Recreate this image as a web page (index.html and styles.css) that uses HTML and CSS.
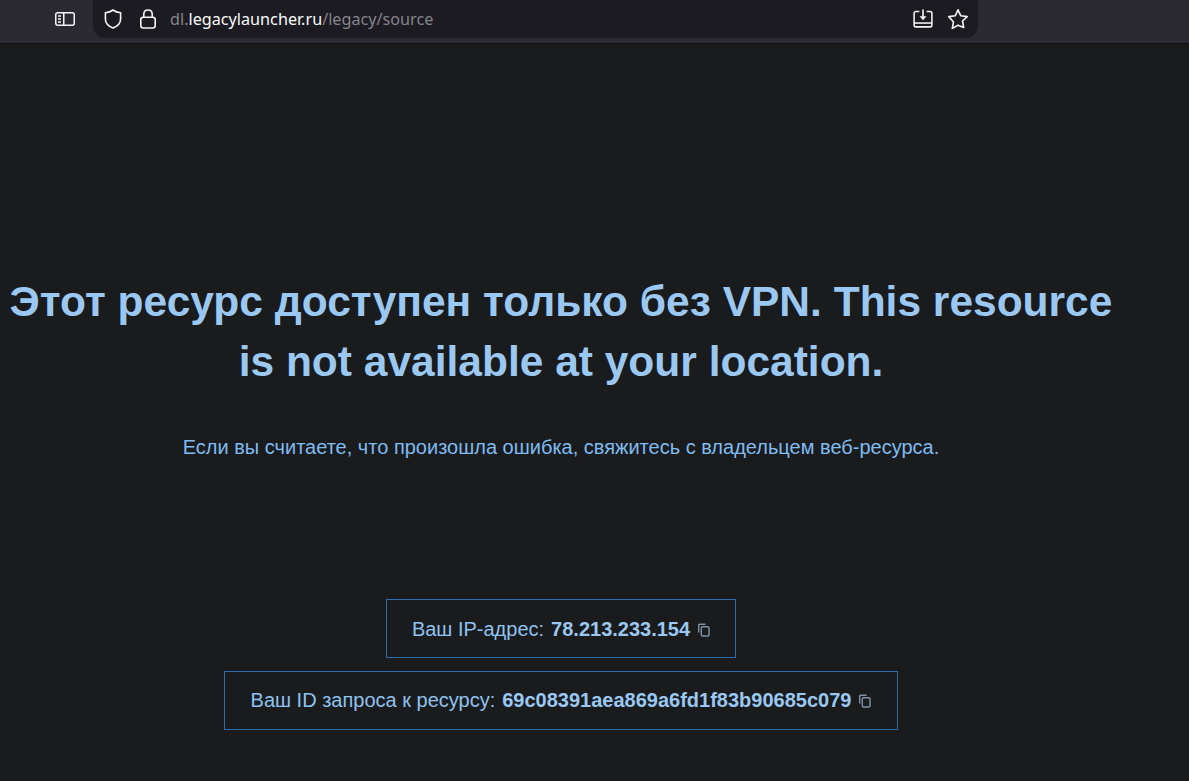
FILE: index.html
```html
<!DOCTYPE html>
<html>

<head>
	<meta charset="utf-8">
	<title>dl.legacylauncher.ru</title>
	<link rel="stylesheet" href="styles.css">
</head>

<body>
	<div class="toolbar">
		<svg class="sidebarIcon" width="22" height="16" viewBox="0 0 22 16" fill="none" stroke="#f4f4f5" stroke-width="1.5">
			<rect x="1.75" y="1.75" width="18.5" height="12.5" rx="2"></rect>
			<path d="M9.75 1.75v12.5"></path>
			<path d="M4 5h3M4 8h3M4 11h3"></path>
		</svg>
		<div class="urlbar">
			<svg class="shieldIcon" width="20" height="22" viewBox="0 0 20 22" fill="none" stroke="#f4f4f5" stroke-width="1.6" stroke-linejoin="round">
				<path d="M10 2c2.200 1.600 4.600 2.400 7.600 2.700v6.300c0 4.200-3 7.200-7.600 9-4.600-1.800-7.600-4.800-7.600-9V4.700C5.400 4.400 7.800 3.600 10 2z"></path>
			</svg>
			<svg class="lockIcon" width="18" height="22" viewBox="0 0 18 22" fill="none" stroke="#f4f4f5" stroke-width="1.6">
				<rect x="1.800" y="9.200" width="14.400" height="10.800" rx="2.500"></rect>
				<path d="M4.800 9V6.200C4.800 3.600 6.500 2 9 2s4.200 1.600 4.200 4.200V9"></path>
			</svg>
			<div class="address"><span class="dim">dl.</span>legacylauncher.ru<span class="dim">/legacy/source</span></div>
			<svg class="saveIcon" width="20" height="19" viewBox="0 0 22 20" fill="none" stroke="#f4f4f5" stroke-width="1.700" stroke-linejoin="round">
				<path d="M7 2.200H3.200a2 2 0 0 0-2 2v13a2 2 0 0 0 2 2h15.600a2 2 0 0 0 2-2v-13a2 2 0 0 0-2-2H15"></path>
				<path d="M1.200 15h19.600"></path>
				<path d="M11 0v8" stroke-width="1.800"></path>
				<path d="M7.200 7.500h7.600L11 11.800z" fill="#f4f4f5" stroke="none"></path>
			</svg>
			<svg class="starIcon" width="22" height="21" viewBox="0 0 22 21" fill="none" stroke="#f4f4f5" stroke-width="1.6" stroke-linejoin="round">
				<path d="M11 1.800l2.800 6 6.400.8-4.700 4.400 1.200 6.400L11 17.200l-5.700 3.200 1.200-6.400L1.800 8.600l6.400-.8z"></path>
			</svg>
		</div>
	</div>

	<div class="page">
		<h1 class="title">Этот ресурс доступен только без VPN. This resource is not available at your location.</h1>
		<p class="note">Если вы считаете, что произошла ошибка, свяжитесь с владельцем веб-ресурса.</p>

		<div class="infoList">
			<div class="info infoShort">
				<span>Ваш IP-адрес:</span>
				<b>78.213.233.154</b>
				<svg class="copyIcon" width="14" height="14" viewBox="0 0 14 14" fill="none" stroke="#7f93a6" stroke-width="1.400">
					<path d="M1.700 9.500V2.300a1 1 0 0 1 1-1h5.800"></path>
					<rect x="4.300" y="3.700" width="7.700" height="9.300" rx="1.200"></rect>
				</svg>
			</div>
			<div class="info">
				<span>Ваш ID запроса к ресурсу:</span>
				<b>69c08391aea869a6fd1f83b90685c079</b>
				<svg class="copyIcon" width="14" height="14" viewBox="0 0 14 14" fill="none" stroke="#7f93a6" stroke-width="1.400">
					<path d="M1.700 9.500V2.300a1 1 0 0 1 1-1h5.800"></path>
					<rect x="4.300" y="3.700" width="7.700" height="9.300" rx="1.200"></rect>
				</svg>
			</div>
		</div>
	</div>
</body>

</html>
```

FILE: styles.css
```css
* {
	margin: 0;
	padding: 0;
	box-sizing: border-box;
}

html,
body {
	height: 100%;
	overflow: hidden;
}

body {
	background: #191b1d;
	font-family: "Liberation Sans", Arial, sans-serif;
}

.toolbar {
	height: 44px;
	padding: 0 211px 6px 54px;
	display: flex;
	align-items: center;
	gap: 17px;
	background: #2b2a33;
	border-bottom: 1px solid #111214;
}

.sidebarIcon {
	flex: none;
}

.urlbar {
	flex: 1;
	height: 38px;
	padding: 0 9px 0 10px;
	display: flex;
	align-items: center;
	background: #1c1b22;
	border-radius: 0 0 12px 12px;
}

.lockIcon {
	margin-left: 16px;
}

.address {
	flex: 1;
	margin-left: 13px;
	font-family: "Noto Sans", sans-serif;
	font-size: 16.2px;
	color: #fbfbfe;
	white-space: nowrap;
}

.dim {
	color: #85848b;
}

.starIcon {
	margin-left: 14px;
}

.page {
	width: 1122px;
	padding-top: 228px;
	text-align: center;
}

.title {
	font-size: 42.5px;
	line-height: 60px;
	font-weight: bold;
	color: #9bc8f2;
}

.note {
	margin-top: 40px;
	font-size: 20px;
	line-height: 30px;
	color: #7fbcf2;
}

.infoList {
	margin-top: 137px;
	display: flex;
	flex-direction: column;
	align-items: center;
	gap: 13px;
}

.info {
	height: 59px;
	padding: 0 25px;
	display: flex;
	align-items: center;
	gap: 7px;
	border: 1px solid #2a6cad;
	font-size: 20px;
	color: #8fc3f0;
}

.infoShort {
	padding: 2px 24px 0;
}

.info span {
	margin-left: 1px;
}

.info b {
	margin-right: -1px;
	color: #9bc8f2;
}

.copyIcon {
	flex: none;
	margin-left: 1px;
}
```
